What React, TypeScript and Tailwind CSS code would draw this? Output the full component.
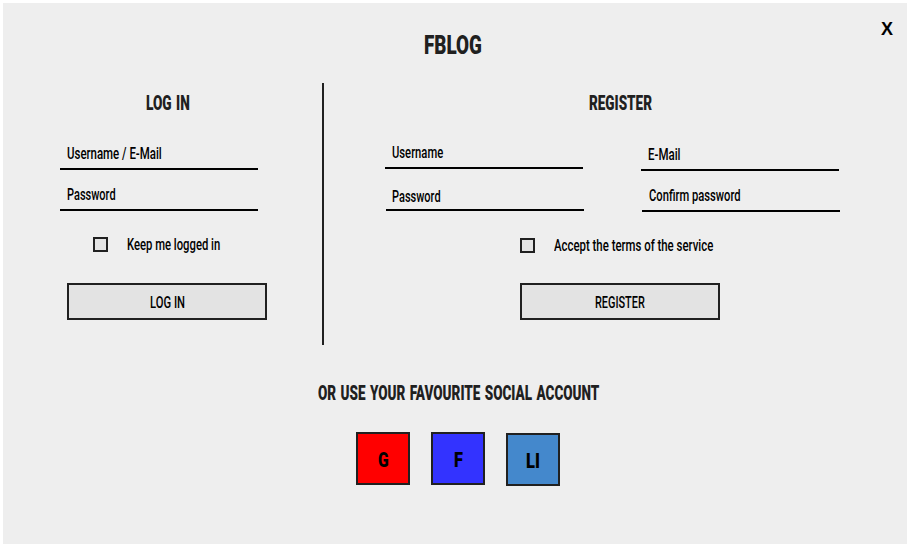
import { useLayoutEffect, useRef } from 'react';

type FitProps = { text: string; width: number; className?: string };

// Condenses a line of text horizontally so that it fills the given width.
function Fit({ text, width, className = '' }: FitProps) {
  const ref = useRef<HTMLSpanElement>(null);
  useLayoutEffect(() => {
    const el = ref.current;
    if (el) el.style.transform = `scaleX(${width / el.offsetWidth})`;
  }, [text, width]);
  return (
    <span className="block shrink-0 text-left" style={{ width }}>
      <span ref={ref} className={`inline-block origin-left whitespace-nowrap align-top ${className}`}>
        {text}
      </span>
    </span>
  );
}

const body = 'text-[17px] leading-5 font-[460] text-black';
const heading = 'text-[19.5px] leading-6 font-black text-[#202020]';

function Field({ text, width, className }: { text: string; width: number; className: string }) {
  return (
    <div className={`w-[198px] border-b-2 border-black ${className}`}>
      <Fit text={text} width={width} className={body} />
    </div>
  );
}

function Check({ text, width, className }: { text: string; width: number; className: string }) {
  return (
    <label className={`flex items-start ${className}`}>
      <span className="mt-[3px] mr-[18.5px] size-[15px] shrink-0 border-2 border-[#202020] bg-[#e3e3e3]" />
      <Fit text={text} width={width} className={body} />
    </label>
  );
}

function Action({ text, width, className }: { text: string; width: number; className: string }) {
  return (
    <button type="button" className={`flex h-[37px] w-[200px] justify-center border-2 border-[#202020] bg-[#e3e3e3] pt-[7px] ${className}`}>
      <Fit text={text} width={width} className={body} />
    </button>
  );
}

function Social({ text, width, className }: { text: string; width: number; className: string }) {
  return (
    <button type="button" className={`flex h-[53px] w-[54px] justify-center border-2 border-[#202020] pt-[14px] ${className}`}>
      <Fit text={text} width={width} className="text-[20px] leading-6 font-black text-black" />
    </button>
  );
}

export default function App() {
  return (
    <div className="h-[547px] w-[910px] bg-white p-[3px] font-['Roboto','Liberation_Sans',sans-serif]">
      <main className="flex h-[541px] w-[904px] flex-col bg-[#eeeeee]">
        <header className="flex h-20 items-start">
          <h1 className="mt-[27px] ml-[421px]">
            <Fit text="FBLOG" width={58} className="text-[25px] leading-8 font-black text-[#202020]" />
          </h1>
          <button type="button" className="mt-[14px] ml-[399px] font-['Liberation_Sans',sans-serif] text-[18px] leading-6 font-bold text-black">
            X
          </button>
        </header>

        <div className="flex h-[262px]">
          <section className="w-[319px]">
            <h2 className="mt-[9px] ml-[143px]">
              <Fit text="LOG IN" width={44} className={`${heading} [word-spacing:1.5px]`} />
            </h2>
            <Field text="Username / E-Mail" width={95} className="mt-[27px] ml-[57px] h-[27px] pl-[6.5px]" />
            <Field text="Password" width={48.5} className="mt-[14px] ml-[57px] h-[27px] pl-[6.5px]" />
            <Check text="Keep me logged in" width={93.5} className="mt-[23px] ml-[90px]" />
            <Action text="LOG IN" width={35} className="mt-[25px] ml-16" />
          </section>
          <div className="w-0.5 bg-[#202020]" />
          <section className="w-[583px]">
            <h2 className="mt-[9px] ml-[265px]">
              <Fit text="REGISTER" width={63} className={heading} />
            </h2>
            <div className="flex h-[96px] gap-[58px] pl-[61px]">
              <div>
                <Field text="Username" width={51.5} className="mt-[26px] h-[27px] pl-[6.5px]" />
                <Field text="Password" width={48.5} className="mt-[17px] ml-px h-[25px] pl-[5.5px]" />
              </div>
              <div className="-ml-px">
                <Field text="E-Mail" width={32.5} className="mt-[28px] h-[27px] pl-[6.5px]" />
                <Field text="Confirm password" width={91.5} className="mt-[14px] ml-px h-[27px] pl-[6.5px]" />
              </div>
            </div>
            <Check text="Accept the terms of the service" width={159.5} className="mt-[23px] ml-[196px]" />
            <Action text="REGISTER" width={50} className="mt-[24px] ml-[196px]" />
          </section>
        </div>

        <footer className="pt-[37px]">
          <h2 className="ml-[315px]">
            <Fit text="OR USE YOUR FAVOURITE SOCIAL ACCOUNT" width={281} className={`${heading} [word-spacing:1.5px]`} />
          </h2>
          <div className="mt-[26px] ml-[353px] flex gap-[21px]">
            <Social text="G" width={11} className="bg-[#ff0000]" />
            <Social text="F" width={9} className="bg-[#3333ff]" />
            <Social text="LI" width={14} className="mt-px bg-[#4488cc]" />
          </div>
        </footer>
      </main>
    </div>
  );
}
